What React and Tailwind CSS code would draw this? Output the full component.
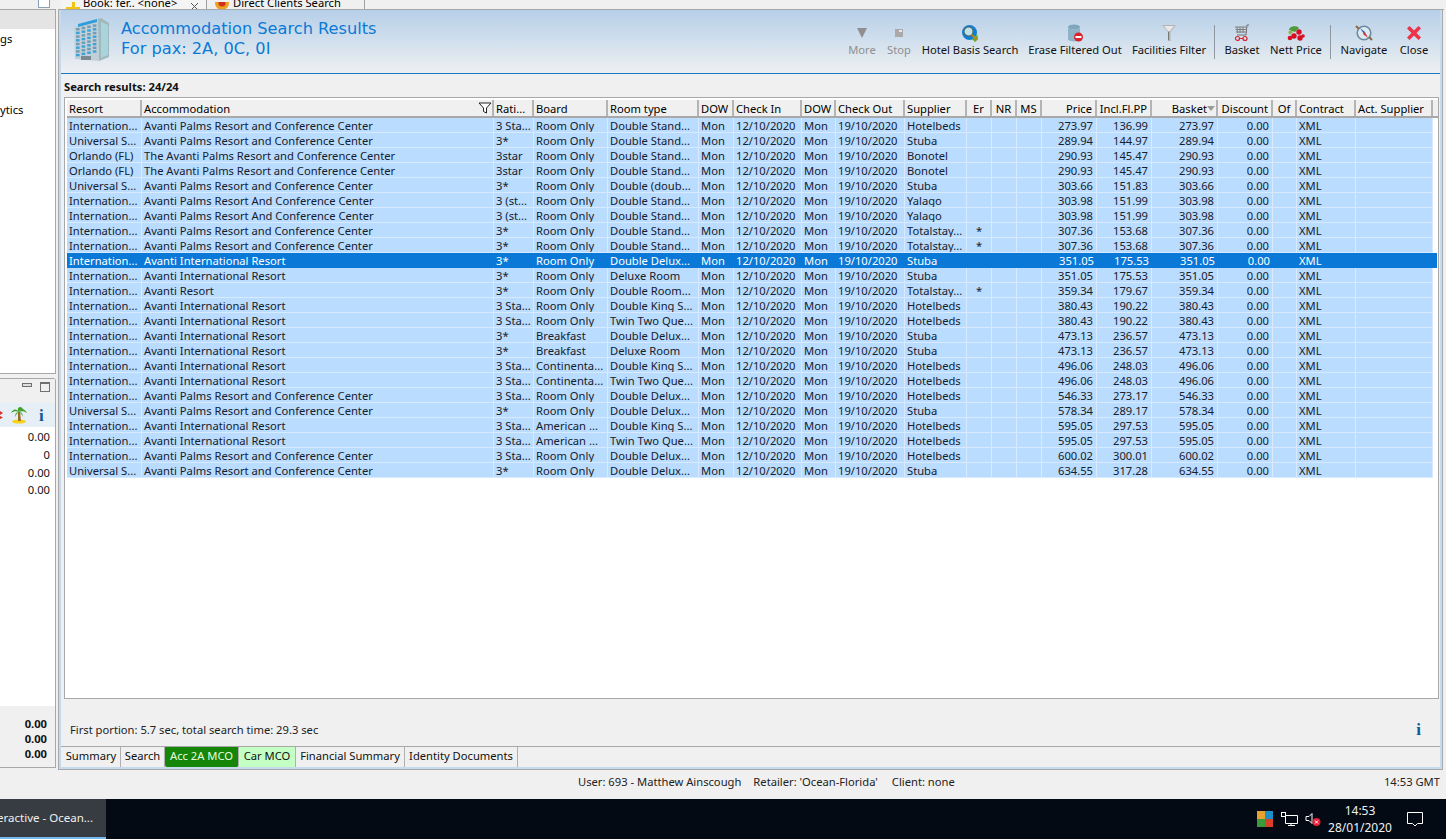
import React from "react";

const UI = { fontFamily: '"Noto Sans","Open Sans",sans-serif' };

const COLS = [
  ["Resort", 75, "l"], ["Accommodation", 352, "l"], ["Rati...", 40, "l"], ["Board", 74, "l"], ["Room type", 91, "l"],
  ["DOW", 35, "l"], ["Check In", 68, "l"], ["DOW", 34, "l"], ["Check Out", 69, "l"], ["Supplier", 62, "l"],
  ["Er", 25, "c"], ["NR", 25, "c"], ["MS", 25, "c"], ["Price", 55, "r"], ["Incl.Fl.PP", 55, "r"], ["Basket", 66, "r"],
  ["Discount", 55, "r"], ["Of", 24, "c"], ["Contract", 59, "l"], ["Act. Supplier", 77, "l"],
];

const APC = "Avanti Palms Resort and Conference Center";
const TAP = "The Avanti Palms Resort and Conference Center";
const APA = "Avanti Palms Resort And Conference Center";
const AIR = "Avanti International Resort";
const I = "Internation...";
const U = "Universal S...";
const O = "Orlando (FL)";
const RO = "Room Only";

const ROWS = [
  [I, APC, "3 Sta...", RO, "Double Stand...", "Hotelbeds", "", "273.97", "136.99"],
  [U, APC, "3*", RO, "Double Stand...", "Stuba", "", "289.94", "144.97"],
  [O, TAP, "3star", RO, "Double Stand...", "Bonotel", "", "290.93", "145.47"],
  [O, TAP, "3star", RO, "Double Stand...", "Bonotel", "", "290.93", "145.47"],
  [U, APC, "3*", RO, "Double (doub...", "Stuba", "", "303.66", "151.83"],
  [I, APA, "3 (st...", RO, "Double Stand...", "Yalago", "", "303.98", "151.99"],
  [I, APA, "3 (st...", RO, "Double Stand...", "Yalago", "", "303.98", "151.99"],
  [I, APC, "3*", RO, "Double Stand...", "Totalstay...", "*", "307.36", "153.68"],
  [I, APC, "3*", RO, "Double Stand...", "Totalstay...", "*", "307.36", "153.68"],
  [I, AIR, "3*", RO, "Double Delux...", "Stuba", "", "351.05", "175.53"],
  [I, AIR, "3*", RO, "Deluxe Room", "Stuba", "", "351.05", "175.53"],
  [I, "Avanti Resort", "3*", RO, "Double Room...", "Totalstay...", "*", "359.34", "179.67"],
  [I, AIR, "3 Sta...", RO, "Double King S...", "Hotelbeds", "", "380.43", "190.22"],
  [I, AIR, "3 Sta...", RO, "Twin Two Que...", "Hotelbeds", "", "380.43", "190.22"],
  [I, AIR, "3*", "Breakfast", "Double Delux...", "Stuba", "", "473.13", "236.57"],
  [I, AIR, "3*", "Breakfast", "Deluxe Room", "Stuba", "", "473.13", "236.57"],
  [I, AIR, "3 Sta...", "Continenta...", "Double King S...", "Hotelbeds", "", "496.06", "248.03"],
  [I, AIR, "3 Sta...", "Continenta...", "Twin Two Que...", "Hotelbeds", "", "496.06", "248.03"],
  [I, APC, "3 Sta...", RO, "Double Delux...", "Hotelbeds", "", "546.33", "273.17"],
  [U, APC, "3*", RO, "Double Delux...", "Stuba", "", "578.34", "289.17"],
  [I, AIR, "3 Sta...", "American ...", "Double King S...", "Hotelbeds", "", "595.05", "297.53"],
  [I, AIR, "3 Sta...", "American ...", "Twin Two Que...", "Hotelbeds", "", "595.05", "297.53"],
  [I, APC, "3 Sta...", RO, "Double Delux...", "Hotelbeds", "", "600.02", "300.01"],
  [U, APC, "3*", RO, "Double Delux...", "Stuba", "", "634.55", "317.28"],
];

function cellsFor(r) {
  return [r[0], r[1], r[2], r[3], r[4], "Mon", "12/10/2020", "Mon", "19/10/2020", r[5], r[6], "", "", r[7], r[8], r[7], "0.00", "", "XML", ""];
}

const align = { l: "text-left pl-[2px]", r: "text-right pr-[3px]", c: "text-center" };

function HeaderRow() {
  return (
    <div className="flex h-[18px] bg-[#f0f0f0] border-b-2 border-[#a8a8a8]">
      {COLS.map(([t, w, a], i) => (
        <div key={i} style={{ width: w }} className={`relative shrink-0 h-[16px] leading-[17px] whitespace-nowrap border-r-2 border-[#b4b4b4] ${align[a]} ${t === "Basket" ? "!pr-[9px]" : ""}`}>
          {t}
          {t === "Accommodation" && (
            <svg className="absolute right-0 top-[2px]" width="14" height="12" viewBox="0 0 14 12">
              <path d="M1 1h12L8.500 6v5l-3-1.500V6z" fill="#fff" stroke="#222" strokeWidth="1" />
            </svg>
          )}
          {t === "Basket" && (
            <svg className="absolute right-[1px] top-[6px]" width="8" height="5" viewBox="0 0 8 5">
              <path d="M0 0h8L4 5z" fill="#9a9a9a" />
            </svg>
          )}
        </div>
      ))}
    </div>
  );
}

function DataRow({ r, selected }) {
  const c = cellsFor(r);
  return (
    <div className={`flex h-[15px] ${selected ? "bg-[#0a78d7] text-white w-[1370px]" : "bg-[#badcff] text-[#14202c] w-[1366px]"}`}>
      {COLS.map(([, w, a], i) => (
        <div
          key={i}
          style={{ width: w }}
          className={`shrink-0 h-[15px] leading-[16px] whitespace-nowrap overflow-hidden ${align[a]} ${selected ? "" : "border-r border-b border-[#d8eaff]"}`}
        >
          {c[i]}
        </div>
      ))}
    </div>
  );
}

function Hotel() {
  const win = [];
  for (let r = 0; r < 8; r++) for (let c = 0; c < 4; c++) win.push([c, r]);
  return (
    <svg width="37" height="46" viewBox="0 0 37 46" className="shrink-0">
      <polygon points="1,10 25,2 26,44 2,42" fill="#c3cfd6" />
      <polygon points="25,2 28,1 36,6 36,40 26,44" fill="#9fb9bd" />
      <polygon points="28,5 35,8 35,38 28,41" fill="#a9d4dc" />
      <polygon points="5,7 24,2 24,5 5,10" fill="#2f9ddc" />
      {win.map(([c, r], i) => (
        <rect key={i} x={3 + c * 5.6} y={11 - c * 1.2 + r * 3.7} width="3.6" height="2.4" fill={r % 2 ? "#3aa3d8" : "#6f9cb6"} />
      ))}
      <rect x="8" y="39" width="10" height="4" fill="#7b8a90" />
    </svg>
  );
}

const Ico = {
  more: (
    <svg width="16" height="16" viewBox="0 0 16 16"><path d="M3 3h10L8 13z" fill="#8f8f8f" /></svg>
  ),
  stop: (
    <svg width="16" height="16" viewBox="0 0 16 16"><rect x="4" y="4" width="8" height="8" fill="#a9a9a9" /><rect x="8" y="5" width="3" height="2" fill="#e8e8e8" /></svg>
  ),
  hotel: (
    <svg width="18" height="18" viewBox="0 0 18 18">
      <circle cx="8.500" cy="8.500" r="7.500" fill="#0d7fd6" />
      <path d="M11 15c2 0 5-3 5-6l1 6-3 3z" fill="#5fae2c" />
      <circle cx="7.500" cy="7.500" r="4.600" fill="#bfe2e6" stroke="#4d6a72" strokeWidth="1.300" />
      <path d="M11 11l5 5" stroke="#b98a22" strokeWidth="2" />
    </svg>
  ),
  erase: (
    <svg width="18" height="18" viewBox="0 0 18 18">
      <ellipse cx="8" cy="3" rx="6" ry="2.400" fill="#7ea6bd" />
      <path d="M2 3v12c0 1.500 3 2.400 6 2.400s6-1 6-2.400V3c0 1.500-3 2.400-6 2.400S2 4.500 2 3z" fill="#8fb3c6" />
      <circle cx="12.500" cy="13" r="4.500" fill="#d8242c" />
      <rect x="9.500" y="12" width="6" height="2" fill="#fff" />
    </svg>
  ),
  filter: (
    <svg width="16" height="18" viewBox="0 0 16 18">
      <path d="M1 1h14L9.500 8v9H7V8z" fill="#b4b4b4" />
      <path d="M3 2h10L9 7H7z" fill="#e9e9e9" />
      <path d="M7 8h1v8H7z" fill="#777" />
    </svg>
  ),
  basket: (
    <svg width="16" height="18" viewBox="0 0 16 18" fill="none">
      <path d="M15 1h-2l-1 10H3" stroke="#6f6f6f" />
      <path d="M1 3h12M1.500 5.500h11M2 8h10M3 3l.5 6M6 3v6M9 3v6" stroke="#7d7d7d" />
      <circle cx="3.500" cy="14.500" r="2" stroke="#d8242c" strokeWidth="1.200" />
      <circle cx="11" cy="14.500" r="2" stroke="#d8242c" strokeWidth="1.200" />
      <path d="M5.500 14.500h3.500" stroke="#d8242c" />
    </svg>
  ),
  nett: (
    <svg width="18" height="17" viewBox="0 0 18 17">
      <path d="M2 5c0-4 8-5 10-2l-4 4z" fill="#4f9a3a" />
      <path d="M1 7c2-2 4-1 5 0l-3 3z" fill="#8fb94a" />
      <circle cx="7" cy="11" r="2.700" fill="#d80d22" />
      <circle cx="12" cy="7" r="2.700" fill="#d80d22" />
      <circle cx="13" cy="13" r="2.700" fill="#d80d22" />
      <circle cx="3" cy="13" r="2.300" fill="#d80d22" />
      <circle cx="16" cy="11" r="1.800" fill="#d80d22" />
    </svg>
  ),
  nav: (
    <svg width="18" height="18" viewBox="0 0 18 18">
      <circle cx="9" cy="9" r="6.800" fill="#dfe9f2" stroke="#6c8aa3" strokeWidth="1.600" />
      <path d="M5 4l5 4-1 2z" fill="#1d5fc0" />
      <path d="M13 14L8 10l2-2z" fill="#d8302c" />
      <path d="M1 2l3 3M17 16l-3-3" stroke="#8a6a44" strokeWidth="2" />
    </svg>
  ),
  close: (
    <svg width="14" height="14" viewBox="0 0 14 14">
      <path d="M2.500 2.500l9 9M11.500 2.500l-9 9" stroke="#ee3348" strokeWidth="3.600" strokeLinecap="square" />
    </svg>
  ),
};

function Tool({ icon, label, w, off }) {
  return (
    <div style={{ width: w }} className={`flex flex-col items-center shrink-0 ${off ? "text-[#8f8f8f]" : "text-[#111]"}`}>
      <div className="h-[18px] flex items-center justify-center">{icon}</div>
      <div className="h-[16px] leading-[16px] whitespace-nowrap">{label}</div>
    </div>
  );
}

function TopTab({ children, w, active }) {
  return (
    <div style={{ width: w }} className={`h-[10px] overflow-hidden flex items-end gap-[3px] px-[5px] shrink-0 border-r border-[#a0a0a0] ${active ? "bg-[#f4f4f4]" : "bg-[#f0f0f0]"}`}>
      {children}
    </div>
  );
}

function BTab({ children, cls, w }) {
  return (
    <div style={{ width: w }} className={`h-[20px] leading-[18px] text-center whitespace-nowrap shrink-0 border-r border-[#b0b0b0] ${cls || ""}`}>
      {children}
    </div>
  );
}

function Palm() {
  return (
    <svg width="18" height="18" viewBox="0 0 18 18">
      <ellipse cx="9" cy="15.500" rx="7" ry="2" fill="#f6d21a" />
      <path d="M8 6h2l1 9H8z" fill="#9a6a20" />
      <path d="M9 6C6 2 3 3 1 7c3-2 5-2 8-1zM9 6c3-4 6-3 8 1-3-2-5-2-8-1zM9 6C7 4 8 1 10 1s3 2 4 3c-2-1-4 0-5 2zM9 6c-3 0-4 3-4 5 1-2 2-4 4-5zM9 6c3 0 4 3 4 5-1-2-2-4-4-5z" fill="#3fa02a" />
    </svg>
  );
}

function LeftPanel() {
  return (
    <div className="w-[56px] shrink-0 h-[769px] flex flex-col">
      <div className="h-[9px] flex justify-end pr-[6px] bg-[#f0f0f0]">
        <div className="w-[12px] h-[8px] border border-t-0 border-[#8aa0b8] bg-white" />
      </div>
      <div className="w-[56px] h-[365px] flex flex-col border-t border-r border-b border-[#a8a8a8]">
        <div className="h-[19px] bg-[#e4e4e4]" />
        <div className="flex-1 bg-white leading-[15px] overflow-hidden">
          <div className="pt-[2px] h-[73px]">gs</div>
          <div>ytics</div>
        </div>
      </div>
      <div className="h-[4px]" />
      <div className="w-[56px] flex-1 flex flex-col border-t border-r border-b border-[#a8a8a8] rounded-tr-[3px] mb-[1px]">
        <div className="h-[24px] bg-[#f0f0f0] flex justify-end items-start gap-[8px] pr-[5px] pt-[3px]">
          <div className="w-[10px] h-[4px] mt-[1px] border border-[#707070] bg-[#e0e0e0]" />
          <div className="w-[10px] h-[10px] border border-[#707070] border-t-2" />
        </div>
        <div className="h-[24px] bg-[#e6eef6] flex items-center">
          <svg width="3" height="8" viewBox="0 0 3 8"><path d="M0 0l3 2-3 2zM0 5l3 1.500L0 8z" fill="#d8302c" /></svg>
          <div className="ml-[7px]"><Palm /></div>
          <span className="ml-[11px] font-bold text-[#0f5a9a] text-[17px] leading-[15px]" style={{ fontFamily: '"Liberation Serif",serif' }}>i</span>
        </div>
        <div className="h-[279px] bg-white text-right pr-[5px] text-[#111] pt-[1px]">
          <div className="h-[18px] leading-[18px]">0.00</div>
          <div className="h-[18px] leading-[18px]">0</div>
          <div className="h-[17px] leading-[18px]">0.00</div>
          <div className="h-[18px] leading-[18px]">0.00</div>
        </div>
        <div className="flex-1 bg-[#f0f0f0] text-right pr-[8px] font-bold flex flex-col justify-end pb-[6px] text-[#111]">
          <div className="h-[15px] leading-[15px]">0.00</div>
          <div className="h-[15px] leading-[15px]">0.00</div>
          <div className="h-[15px] leading-[15px]">0.00</div>
        </div>
      </div>
    </div>
  );
}

function MainPanel() {
  return (
    <div className="w-[1385px] ml-[3px] h-[769px] flex flex-col">
      <div className="h-[10px] flex pl-[2px] border-b border-[#a8a8a8] bg-[#f0f0f0]">
        <TopTab w={146} active>
          <svg width="14" height="8" viewBox="0 0 14 8"><path d="M0 7h14v-2H9V0H6v5H0z" fill="#f1c40f" /></svg>
          <span className="whitespace-nowrap leading-[12px] mb-[1px]">Book: fer.. &lt;none&gt;</span>
          <svg className="ml-auto mr-[2px]" width="9" height="7" viewBox="0 0 9 7"><path d="M1 0l7 7M8 0L1 7" stroke="#555" /></svg>
        </TopTab>
        <TopTab w={158}>
          <svg className="ml-[3px]" width="15" height="8" viewBox="0 0 15 8"><circle cx="7" cy="1" r="7" fill="#f0a020" /><circle cx="7" cy="1" r="3.500" fill="#d03020" /></svg>
          <span className="whitespace-nowrap leading-[12px] mb-[1px]">Direct Clients Search</span>
        </TopTab>
      </div>
      <div className="flex-1 flex flex-col border-l-2 border-r-2 border-b-2 border-[#c5d9ef] outline outline-1 outline-[#a8a8a8] bg-[#f0f0f0] w-[1383px]">
        <div className="h-[64px] border-b border-[#1a78c2] bg-gradient-to-b from-[#b6cfe8] to-[#eef0f2] flex pl-[12px] pr-[11px] shrink-0">
          <div className="pt-[7px]"><Hotel /></div>
          <div className="ml-[11px] pt-[9px] text-[#0a7ad6] text-[16.2px] leading-[20px] whitespace-nowrap" style={{ fontFamily: '"DejaVu Sans",sans-serif' }}>
            <div>Accommodation Search Results</div>
            <div>For pax: 2A, 0C, 0I</div>
          </div>
          <div className="ml-auto flex pt-[14px]">
            <Tool icon={Ico.more} label="More" w={34} off />
            <div className="w-[5px]" />
            <Tool icon={Ico.stop} label="Stop" w={30} off />
            <div className="w-[6px]" />
            <Tool icon={Ico.hotel} label="Hotel Basis Search" w={100} />
            <div className="w-[7px]" />
            <Tool icon={Ico.erase} label="Erase Filtered Out" w={96} />
            <div className="w-[7px]" />
            <Tool icon={Ico.filter} label="Facilities Filter" w={78} />
            <div className="w-[6px]" />
            <div className="w-[1px] h-[34px] bg-[#8f98a0] mt-[1px]" />
            <div className="w-[8px]" />
            <Tool icon={Ico.basket} label="Basket" w={38} />
            <div className="w-[7px]" />
            <Tool icon={Ico.nett} label="Nett Price" w={56} />
            <div className="w-[6px]" />
            <div className="w-[1px] h-[34px] bg-[#8f98a0] mt-[1px]" />
            <div className="w-[8px]" />
            <Tool icon={Ico.nav} label="Navigate" w={50} />
            <div className="w-[10px]" />
            <Tool icon={Ico.close} label="Close" w={30} />
          </div>
        </div>
        <div className="h-[23px] leading-[26px] pl-[3px] font-bold text-[#111] shrink-0">Search results: 24/24</div>
        <div className="mx-[3px] w-[1375px] h-[602px] bg-white border border-[#a8a8a8] shrink-0 pl-[2px] pt-[2px] overflow-hidden">
          <HeaderRow />
          {ROWS.map((r, i) => <DataRow key={i} r={r} selected={i === 9} />)}
        </div>
        <div className="h-[47px] flex items-center justify-between pl-[9px] pr-[19px] pt-[15px] text-[#222] shrink-0">
          <span>First portion: 5.7 sec, total search time: 29.3 sec</span>
          <span className="font-bold text-[#0f5a9a] text-[17px]" style={{ fontFamily: '"Liberation Serif",serif' }}>i</span>
        </div>
        <div className="flex-1 border-t border-[#a8a8a8] flex pl-[1px] text-[#111]">
          <BTab w={59}>Summary</BTab>
          <BTab w={44}>Search</BTab>
          <BTab w={74} cls="bg-[#158607] !text-[#e8ffe0] rounded-b-[2px]">Acc 2A MCO</BTab>
          <BTab w={57} cls="bg-[#c4ffc4]">Car MCO</BTab>
          <BTab w={109}>Financial Summary</BTab>
          <BTab w={113}>Identity Documents</BTab>
        </div>
      </div>
    </div>
  );
}

export default function App() {
  return (
    <div style={UI} className="w-[1446px] h-[839px] overflow-hidden bg-[#f0f0f0] text-[11.2px] flex flex-col">
      <div className="flex h-[769px] shrink-0">
        <LeftPanel />
        <MainPanel />
      </div>
      <div className="h-[30px] shrink-0 flex items-center text-[#222] pr-[6px] pb-[3px] whitespace-nowrap">
        <span className="ml-[578px]">User: 693 - Matthew Ainscough</span>
        <span className="ml-[12px]">Retailer: 'Ocean-Florida'</span>
        <span className="ml-[14px]">Client: none</span>
        <span className="ml-auto">14:53 GMT</span>
      </div>
      <div className="h-[40px] shrink-0 bg-[#030a14] flex items-stretch text-[#f0f0f0] whitespace-nowrap">
        <div className="w-[106px] bg-[#373c43] border-b-2 border-[#76b9ed] flex items-center justify-end pr-[13px] overflow-hidden">
          <span className="text-[11.5px]">eractive - Ocean...</span>
        </div>
        <div className="ml-auto flex items-center">
          <svg width="16" height="16" viewBox="0 0 16 16"><rect width="8" height="8" fill="#e8a030" /><rect x="8" width="8" height="8" fill="#1a8fc8" /><rect y="8" width="8" height="8" fill="#3a9a3a" /><rect x="8" y="8" width="8" height="8" fill="#d8402a" /></svg>
          <svg className="ml-[8px]" width="17" height="14" viewBox="0 0 17 14" fill="none" stroke="#fff"><path d="M4.500 3.500h12v8h-12zM10 11.500v2M7 13.500h7" /><rect x=".5" y=".5" width="4" height="4" fill="#030a14" /></svg>
          <svg className="ml-[7px]" width="17" height="14" viewBox="0 0 16 14" fill="none"><path d="M.5 4.500h3l3-3v10l-3-3h-3z" stroke="#fff" /><circle cx="11" cy="10" r="4" fill="#e81f38" /><path d="M9.500 8.500l3 3M12.500 8.500l-3 3" stroke="#fff" /></svg>
          <div className="ml-[5px] w-[66px] text-center leading-[17px] text-[12px]">
            <div>14:53</div>
            <div>28/01/2020</div>
          </div>
          <svg className="ml-[14px] mr-[23px]" width="16" height="15" viewBox="0 0 16 15" fill="none" stroke="#fff"><path d="M.5.500h15v11h-5l-2.500 2.500-2.500-2.500h-5z" /></svg>
        </div>
      </div>
    </div>
  );
}
